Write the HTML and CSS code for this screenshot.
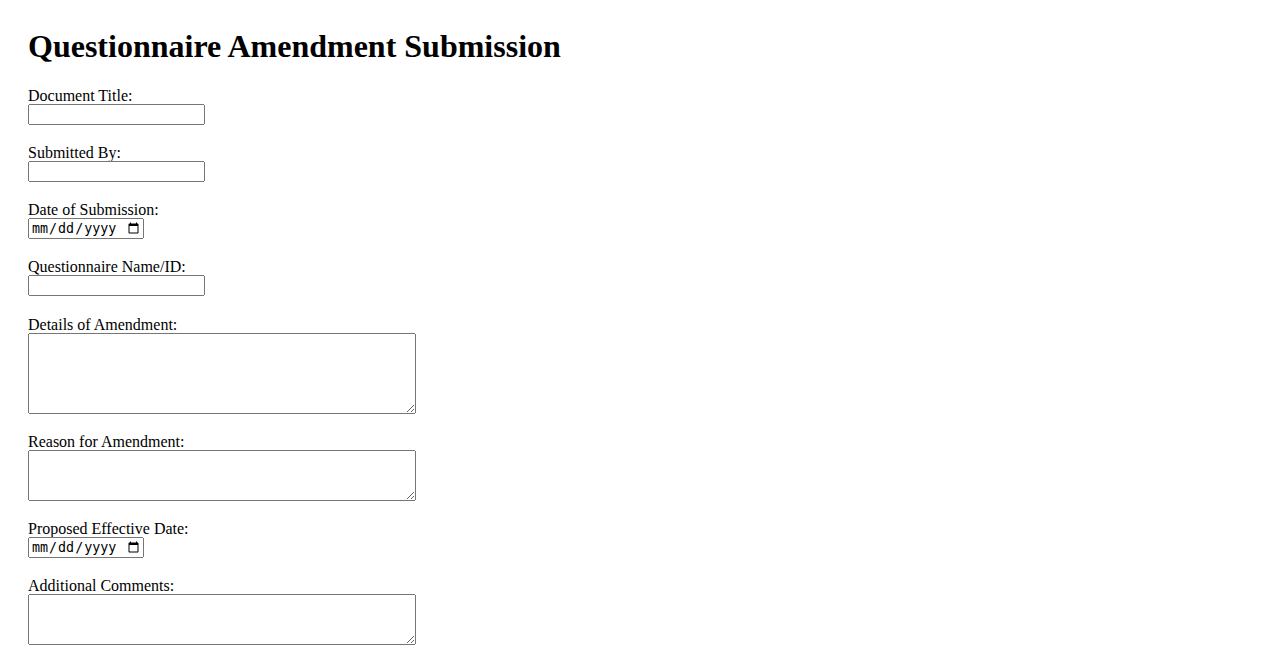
FILE: index.html
```html
<!DOCTYPE html>
<html lang="en">
<head>
<meta charset="utf-8">
<title>Questionnaire Amendment Submission</title>
<link rel="stylesheet" href="styles.css">
</head>
<body>
<main class="page">
  <h1 class="title">Questionnaire Amendment Submission</h1>
  <form class="form">
    <div class="field">
      <label class="label" for="docTitle">Document Title:</label>
      <input class="text-input" type="text" id="docTitle">
    </div>
    <div class="field">
      <label class="label" for="submittedBy">Submitted By:</label>
      <input class="text-input" type="text" id="submittedBy">
    </div>
    <div class="field">
      <label class="label" for="submissionDate">Date of Submission:</label>
      <input class="date-input" type="date" id="submissionDate">
    </div>
    <div class="field">
      <label class="label" for="questionnaireId">Questionnaire Name/ID:</label>
      <input class="text-input" type="text" id="questionnaireId">
    </div>
    <div class="field field-after-input">
      <label class="label" for="details">Details of Amendment:</label>
      <textarea class="area area-tall" id="details" rows="5"></textarea>
    </div>
    <div class="field">
      <label class="label" for="reason">Reason for Amendment:</label>
      <textarea class="area area-short" id="reason" rows="3"></textarea>
    </div>
    <div class="field">
      <label class="label" for="effectiveDate">Proposed Effective Date:</label>
      <input class="date-input" type="date" id="effectiveDate">
    </div>
    <div class="field">
      <label class="label" for="comments">Additional Comments:</label>
      <textarea class="area area-short" id="comments" rows="3"></textarea>
    </div>
  </form>
</main>
</body>
</html>
```

FILE: styles.css
```css
html, body {
  margin: 0;
  padding: 0;
  background: #ffffff;
}

.page {
  padding: 28px 28px 20px;
  font-family: "Liberation Serif", "Times New Roman", serif;
  color: #000000;
}

.title {
  margin: 0 0 22px;
  font-size: 32px;
  line-height: 37px;
  font-weight: bold;
}

.form {
  display: flex;
  flex-direction: column;
  gap: 19px;
}

.field {
  display: flex;
  flex-direction: column;
  align-items: flex-start;
}

.field-after-input {
  margin-top: 1px;
}

.label {
  font-size: 16px;
  line-height: 17px;
}

.text-input {
  width: 177px;
  height: 21px;
  box-sizing: border-box;
}

.date-input {
  width: 116px;
  height: 21px;
  box-sizing: border-box;
}

.area {
  width: 388px;
  box-sizing: border-box;
  margin: 0;
}

.area-tall {
  height: 81px;
}

.area-short {
  height: 51px;
}
```
